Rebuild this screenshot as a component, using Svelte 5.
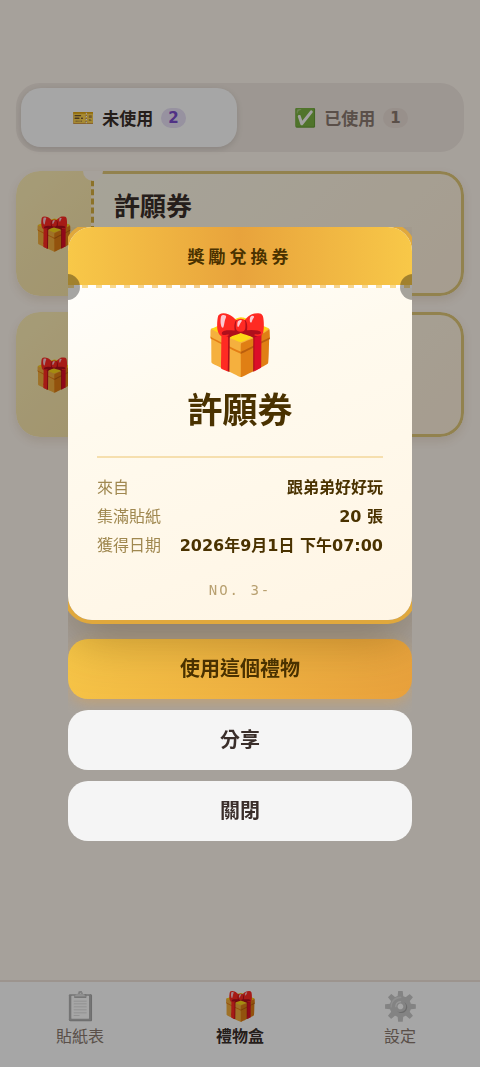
<script lang="ts">
  interface Gift {
    id: number
    title: string
    icon: string
  }

  let gifts: Gift[] = $state([
    { id: 3, title: '許願券', icon: '🎁' },
    { id: 2, title: '許願券', icon: '🎁' }
  ])

  let tabs = [
    { id: 'unused', icon: '🎫', label: '未使用', count: 2 },
    { id: 'used', icon: '✅', label: '已使用', count: 1 }
  ]

  let navItems = [
    { id: 'stickers', icon: '📋', label: '貼紙表' },
    { id: 'gifts', icon: '🎁', label: '禮物盒' },
    { id: 'settings', icon: '⚙️', label: '設定' }
  ]

  let details = [
    { label: '來自', value: '跟弟弟好好玩' },
    { label: '集滿貼紙', value: '20 張' },
    { label: '獲得日期', value: '2026年9月1日 下午07:00' }
  ]

  let activeTab = $state('unused')
  let selected: Gift | null = $state({ id: 3, title: '許願券', icon: '🎁' })

  function close() {
    selected = null
  }
</script>

<main class="page">
  <div class="tabs" role="tablist">
    {#each tabs as tab (tab.id)}
      <button
        class="tab"
        class:active={activeTab === tab.id}
        role="tab"
        aria-selected={activeTab === tab.id}
        onclick={() => (activeTab = tab.id)}
      >
        <span class="tab-icon">{tab.icon}</span>
        <span>{tab.label}</span>
        <span class="count">{tab.count}</span>
      </button>
    {/each}
  </div>

  <div class="tickets">
    {#each gifts as gift (gift.id)}
      <button class="ticket" onclick={() => (selected = gift)}>
        <span class="stub">{gift.icon}</span>
        <span class="ticket-main">{gift.title}</span>
      </button>
    {/each}
  </div>
</main>

<nav class="bottom-nav">
  {#each navItems as item (item.id)}
    <a href="#{item.id}" class="nav-item" class:current={item.id === 'gifts'}>
      <span class="nav-icon">{item.icon}</span>
      <span class="nav-label">{item.label}</span>
    </a>
  {/each}
</nav>

{#if selected}
  <div class="overlay">
    <div class="modal" role="dialog" aria-modal="true" aria-label={selected.title}>
      <div class="coupon">
        <div class="coupon-head">獎勵兌換券</div>
        <div class="coupon-body">
          <div class="coupon-icon">{selected.icon}</div>
          <h2>{selected.title}</h2>
          <dl>
            {#each details as row (row.label)}
              <div class="row">
                <dt>{row.label}</dt>
                <dd>{row.value}</dd>
              </div>
            {/each}
          </dl>
          <div class="serial">NO. {selected.id}-</div>
        </div>
      </div>

      <div class="actions">
        <button class="btn primary">使用這個禮物</button>
        <button class="btn">分享</button>
        <button class="btn" onclick={close}>關閉</button>
      </div>
    </div>
  </div>
{/if}

<style>
  :global(body) {
    background: #fff7ee;
    color: #3a2e2a;
    font-family: 'DejaVu Sans', 'Noto Sans CJK TC', sans-serif;
  }

  button {
    font-family: inherit;
    border: 0;
    cursor: pointer;
  }

  .page {
    padding: 83px 16px 104px;
  }

  .tabs {
    display: flex;
    gap: 6px;
    padding: 5px;
    border-radius: 24px;
    background: #f1e8e0;
  }

  .tab {
    flex: 1;
    display: flex;
    align-items: center;
    justify-content: center;
    gap: 8px;
    height: 59px;
    border-radius: 20px;
    background: none;
    color: #8a7a70;
    font-size: 17px;
    font-weight: 700;
  }

  .tab.active {
    background: #fff;
    color: #3a2e2a;
    box-shadow: 0 2px 6px rgba(0, 0, 0, 0.12);
  }

  .tab-icon {
    font-size: 18px;
  }

  .count {
    padding: 0 7px;
    border-radius: 10px;
    background: #eaddd6;
    font-size: 15px;
    line-height: 20px;
  }

  .active .count {
    background: #e8e0f6;
    color: #7c4dcc;
  }

  .tickets {
    display: grid;
    gap: 16px;
    margin-top: 19px;
  }

  .ticket {
    position: relative;
    display: flex;
    overflow: hidden;
    height: 125px;
    padding: 0;
    border-radius: 24px;
    background: none;
    color: inherit;
    text-align: left;
    box-shadow: 0 4px 10px rgba(120, 80, 20, 0.12);
  }

  /* punched hole between the stub and the body */
  .ticket::before {
    content: '';
    position: absolute;
    top: -10px;
    left: 67px;
    width: 20px;
    height: 20px;
    border-radius: 50%;
    background: #fff7ee;
  }

  .stub {
    display: grid;
    place-items: center;
    width: 75px;
    border-radius: 24px 0 0 24px;
    background: linear-gradient(135deg, #fff0b8, #f8e4a8);
    font-size: 32px;
  }

  .ticket-main {
    flex: 1;
    padding: 16px 20px;
    border: 3px solid #e0c878;
    border-left: 3px dashed #d8b040;
    border-radius: 0 24px 24px 0;
    background: linear-gradient(135deg, #fffbea, #fff1dc);
    font-size: 26px;
    font-weight: 700;
    line-height: 34px;
  }

  .bottom-nav {
    position: fixed;
    inset: auto 0 0;
    display: flex;
    height: 85px;
    border-top: 2px solid #f0e4da;
    background: #fff;
  }

  .nav-item {
    flex: 1;
    display: flex;
    flex-direction: column;
    align-items: center;
    padding-top: 8px;
    color: #8a7a70;
    font-size: 16px;
    text-decoration: none;
  }

  .nav-icon {
    font-size: 28px;
    line-height: 34px;
    filter: grayscale(1);
    opacity: 0.6;
  }

  .nav-label {
    line-height: 26px;
  }

  .current {
    color: #3a2e2a;
    font-weight: 700;
  }

  .current .nav-icon {
    filter: none;
    opacity: 1;
  }

  .overlay {
    position: fixed;
    inset: 0;
    display: flex;
    align-items: center;
    justify-content: center;
    padding: 24px;
    background: rgba(0, 0, 0, 0.35);
  }

  .modal {
    width: 100%;
    max-width: 344px;
    max-height: 100%;
    overflow: auto;
  }

  .coupon {
    position: relative;
    border-radius: 24px;
    background: linear-gradient(160deg, #fff, #fffaee 40%, #fff5e4);
    box-shadow: 0 0 0 4px #e0a83c, 0 20px 50px rgba(80, 50, 0, 0.35);
    color: #4a3200;
  }

  .coupon-head {
    position: relative;
    padding-bottom: 1px;
    border-radius: 24px 24px 0 0;
    background: linear-gradient(90deg, #f8c848, #e8a33c 50%, #f8c848);
    font-size: 17px;
    font-weight: 700;
    line-height: 60px;
    letter-spacing: 4px;
    text-align: center;
  }

  .coupon-head::after {
    content: '';
    position: absolute;
    inset: auto 0 0;
    height: 3px;
    background: repeating-linear-gradient(90deg, rgba(255, 255, 255, 0.4) 0 6px, #fff 6px 14px);
  }

  .coupon::before,
  .coupon::after {
    content: '';
    position: absolute;
    z-index: 1;
    top: 47px;
    width: 26px;
    height: 26px;
    border-radius: 50%;
    background: rgba(0, 0, 0, 0.35);
  }

  .coupon::before {
    left: -14px;
  }

  .coupon::after {
    right: -14px;
  }

  .coupon-body {
    padding: 17px 29px 20px;
    text-align: center;
  }

  .coupon-icon {
    font-size: 58px;
    line-height: 80px;
  }

  h2 {
    margin: 0 0 19px;
    font-size: 35px;
    line-height: 52px;
  }

  dl {
    margin: 0;
    padding-top: 15px;
    border-top: 2px solid #f6dfae;
  }

  .row {
    display: flex;
    justify-content: space-between;
    font-size: 16px;
    line-height: 29px;
  }

  dt {
    color: #a08850;
  }

  dd {
    margin: 0;
    font-weight: 700;
  }

  .serial {
    margin-top: 20px;
    color: #b8a070;
    font-family: 'DejaVu Sans Mono', monospace;
    font-size: 14px;
    line-height: 20px;
    letter-spacing: 2px;
  }

  .actions {
    display: grid;
    gap: 11px;
    margin-top: 19px;
  }

  .btn {
    height: 60px;
    padding: 0 16px 2px;
    border-radius: 20px;
    background: #f5f5f5;
    color: #3a2e2a;
    font-size: 20px;
    font-weight: 700;
  }

  .primary {
    background: linear-gradient(135deg, #f8c848, #e8a03c);
    box-shadow: 0 4px 14px rgba(232, 160, 60, 0.4);
    color: #4a3200;
  }
</style>
